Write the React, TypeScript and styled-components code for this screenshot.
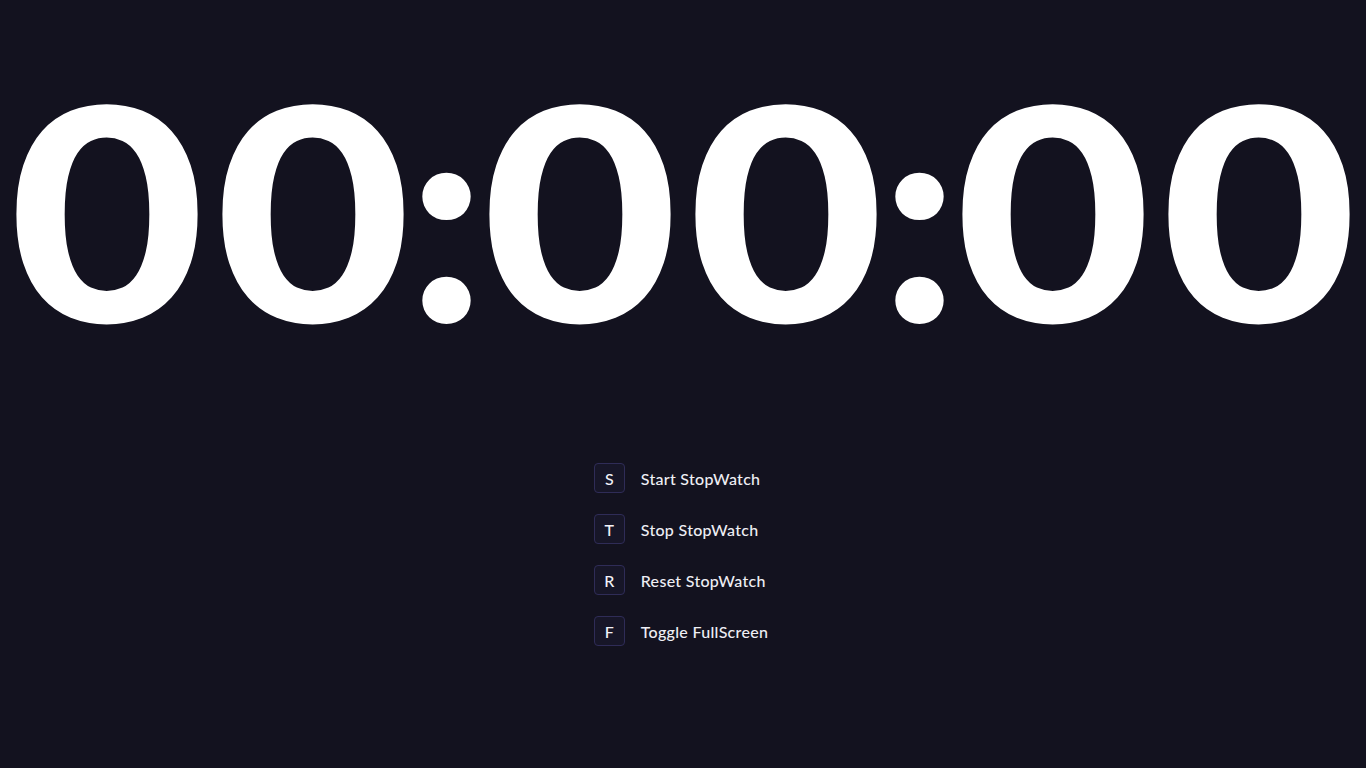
import React from "react";
import styled, { createGlobalStyle } from "styled-components";

const Global = createGlobalStyle`
  html, body { margin: 0; padding: 0; background: #13121f; }
  body { font-family: "Lato", "Open Sans", sans-serif; color: #ffffff; }
`;

const Page = styled.main`
  width: 100vw;
  height: 100vh;
  box-sizing: border-box;
  display: flex;
  flex-direction: column;
  align-items: center;
  padding-top: 59px;
  overflow: hidden;
`;

const Clock = styled.div`
  display: flex;
  justify-content: center;
  align-items: center;
  height: 297px;
  font-family: "Lato", sans-serif;
  font-weight: 900;
  font-size: 297px;
  line-height: 1;
  color: #ffffff;
`;

const Digit = styled.span`
  display: inline-flex;
  justify-content: center;
  width: 206px;
  transform: scaleX(1.14);
`;

const Colon = styled.span`
  display: inline-flex;
  justify-content: center;
  width: 61px;
  letter-spacing: -15px;
  text-indent: -15px;
`;

const Shortcuts = styled.ul`
  list-style: none;
  margin: 107px 0 0;
  padding: 0 4px 0 0;
  display: flex;
  flex-direction: column;
  gap: 21px;
`;

const Row = styled.li`
  display: flex;
  align-items: center;
  gap: 16px;
  height: 30px;
`;

const Key = styled.kbd`
  box-sizing: border-box;
  min-width: 31px;
  height: 30px;
  padding: 0 9px;
  display: inline-flex;
  align-items: center;
  justify-content: center;
  border: 1px solid #2f2c57;
  border-radius: 4px;
  background: #171628;
  font-family: "Lato", sans-serif;
  font-size: 16px;
  font-weight: 500;
  color: #f2f2f8;
`;

const Label = styled.span`
  font-family: "Lato", sans-serif;
  font-size: 16px;
  font-weight: 500;
  color: #eeeef4;
  letter-spacing: 0.3px;
`;

const shortcuts = [
  { key: "S", label: "Start StopWatch" },
  { key: "T", label: "Stop StopWatch" },
  { key: "R", label: "Reset StopWatch" },
  { key: "F", label: "Toggle FullScreen" },
];

export default function App() {
  const time = "00:00:00";
  return (
    <>
      <Global />
      <Page>
        <Clock>
          {time.split("").map((c, i) =>
            c === ":" ? <Colon key={i}>:</Colon> : <Digit key={i}>{c}</Digit>
          )}
        </Clock>
        <Shortcuts>
          {shortcuts.map((s) => (
            <Row key={s.key}>
              <Key>{s.key}</Key>
              <Label>{s.label}</Label>
            </Row>
          ))}
        </Shortcuts>
      </Page>
    </>
  );
}
